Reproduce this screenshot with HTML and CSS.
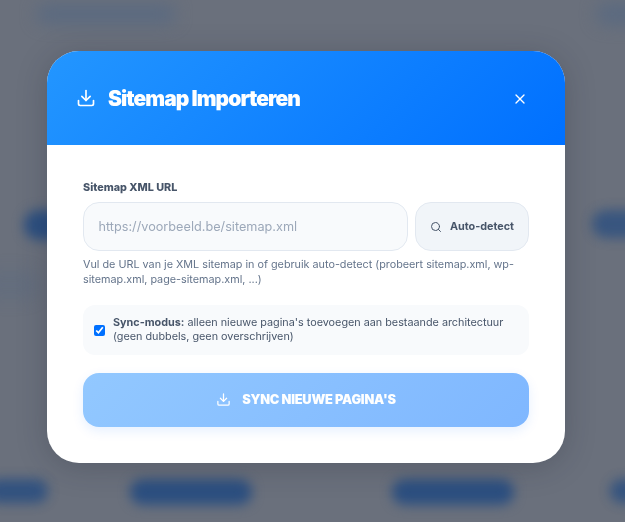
FILE: index.html
```html
<!DOCTYPE html>
<html lang="nl">
<head>
<meta charset="utf-8">
<title>Sitemap Importeren</title>
<link rel="stylesheet" href="styles.css">
</head>
<body>
<div class="backdrop" aria-hidden="true">
  <div class="blob faint b-top1"></div>
  <div class="blob faint b-top2"></div>
  <div class="blob faint b-left2"></div>
  <div class="blob b-left"></div>
  <div class="blob b-right"></div>
  <div class="blob b-bot1"></div>
  <div class="blob b-bot2"></div>
  <div class="blob b-bot3"></div>
  <div class="blob b-bot4"></div>
</div>
<main class="overlay">
  <section class="modal">
    <header class="modal-head">
      <div class="title-group">
        <svg class="icon-title" viewBox="0 0 24 24" fill="none" stroke="currentColor" stroke-width="2" stroke-linecap="round" stroke-linejoin="round"><path d="M21 15v4a2 2 0 0 1-2 2H5a2 2 0 0 1-2-2v-4"/><polyline points="7 10 12 15 17 10"/><line x1="12" y1="15" x2="12" y2="3"/></svg>
        <h1 class="title">Sitemap Importeren</h1>
      </div>
      <button class="close" type="button" aria-label="Sluiten">
        <svg viewBox="0 0 24 24" fill="none" stroke="currentColor" stroke-width="2" stroke-linecap="round"><line x1="18" y1="6" x2="6" y2="18"/><line x1="6" y1="6" x2="18" y2="18"/></svg>
      </button>
    </header>
    <div class="modal-body">
      <label class="field-label" for="url">Sitemap XML URL</label>
      <div class="url-row">
        <input class="url-input" id="url" type="text" placeholder="https://voorbeeld.be/sitemap.xml">
        <button class="detect" type="button">
          <svg viewBox="0 0 24 24" fill="none" stroke="currentColor" stroke-width="2" stroke-linecap="round"><circle cx="11" cy="11" r="8"/><line x1="21" y1="21" x2="16.65" y2="16.65"/></svg>
          Auto-detect
        </button>
      </div>
      <p class="help">Vul de URL van je XML sitemap in of gebruik auto-detect (probeert sitemap.xml, wp-sitemap.xml, page-sitemap.xml, ...)</p>
      <label class="sync-box">
        <input class="sync-check" type="checkbox" checked>
        <span class="sync-text"><strong>Sync-modus:</strong> alleen nieuwe pagina's toevoegen aan bestaande architectuur (geen dubbels, geen overschrijven)</span>
      </label>
      <button class="submit" type="button">
        <svg viewBox="0 0 24 24" fill="none" stroke="currentColor" stroke-width="2" stroke-linecap="round" stroke-linejoin="round"><path d="M21 15v4a2 2 0 0 1-2 2H5a2 2 0 0 1-2-2v-4"/><polyline points="7 10 12 15 17 10"/><line x1="12" y1="15" x2="12" y2="3"/></svg>
        SYNC NIEUWE PAGINA'S
      </button>
    </div>
  </section>
</main>
</body>
</html>
```
FILE: styles.css
```css
* { box-sizing: border-box; }
html, body { height: 100%; }
body {
  margin: 0;
  overflow: hidden;
  background: #6a707c;
  font-family: Inter, "Liberation Sans", sans-serif;
  color: #475569;
}
.backdrop { position: fixed; inset: 0; overflow: hidden; }
.blob {
  position: absolute;
  border-radius: 20px;
  background: #2c4f80;
  filter: blur(6px);
}
.blob.faint { background: #5b6a80; filter: blur(8px); }
.b-top1 { left: 36px; top: 4px; width: 140px; height: 20px; }
.b-top2 { left: 596px; top: 3px; width: 50px; height: 22px; }
.b-left2 { left: -20px; top: 270px; width: 60px; height: 30px; opacity: .4; }
.b-left { left: 24px; top: 210px; width: 40px; height: 30px; }
.b-right { left: 592px; top: 210px; width: 60px; height: 28px; opacity: .8; }
.b-bot1 { left: -14px; top: 479px; width: 62px; height: 24px; opacity: .9; }
.b-bot2 { left: 130px; top: 479px; width: 122px; height: 26px; }
.b-bot3 { left: 392px; top: 479px; width: 122px; height: 26px; }
.b-bot4 { left: 610px; top: 479px; width: 40px; height: 24px; opacity: .85; }
.overlay {
  position: relative;
  padding: 51px 60px 0 47px;
}
.modal {
  width: 518px;
  height: 412px;
  background: #fff;
  border-radius: 32px;
  overflow: hidden;
  box-shadow: 0 4px 30px rgba(30, 35, 50, .25);
}
.modal-head {
  height: 94px;
  padding: 0 37px 0 29px;
  display: flex;
  align-items: center;
  justify-content: space-between;
  background: linear-gradient(135deg, #2396ff 0%, #0070ff 100%);
  color: #fff;
}
.title-group { display: flex; align-items: center; gap: 12px; }
.icon-title { width: 20px; height: 20px; display: block; }
.title {
  margin: 1px 0 0;
  font-size: 21px;
  line-height: 28px;
  font-weight: 900;
  letter-spacing: -.95px;
}
.close {
  width: 16px;
  height: 16px;
  padding: 0;
  margin-top: 1px;
  border: 0;
  background: none;
  color: #fff;
  display: block;
}
.close svg { width: 16px; height: 16px; display: block; }
.modal-body { padding: 36px 36px 0; }
.field-label {
  display: block;
  font-size: 10.8px;
  line-height: 14px;
  font-weight: 800;
  color: #475569;
  margin-bottom: 7px;
}
.url-row { display: flex; gap: 7px; }
.url-input {
  width: 325px;
  height: 49px;
  padding: 0 14.5px;
  border: 1px solid #e2e8f0;
  border-radius: 16px;
  background: #f8fafc;
  font: 400 12.7px Inter, "Liberation Sans", sans-serif;
  color: #475569;
  outline: none;
}
.url-input::placeholder { color: #9ca8b9; opacity: 1; }
.detect {
  width: 114px;
  height: 49px;
  padding: 0;
  border: 1px solid #e2e8f0;
  border-radius: 16px;
  background: #f1f5f9;
  color: #475569;
  font: 700 10.8px Inter, "Liberation Sans", sans-serif;
  display: flex;
  align-items: center;
  justify-content: center;
  gap: 8px;
}
.detect svg { width: 12px; height: 12px; display: block; }
.help {
  margin: 6px 0 0;
  font-size: 10.8px;
  line-height: 15px;
  color: #64748b;
}
.sync-box {
  margin-top: 18px;
  height: 50px;
  padding: 0 24px 0 11px;
  border-radius: 12px;
  background: #f8fafc;
  display: flex;
  align-items: center;
  gap: 8px;
}
.sync-check {
  flex: none;
  width: 11px;
  height: 11px;
  margin: 0;
  accent-color: #0070ff;
}
.sync-text {
  font-size: 10.8px;
  line-height: 14px;
  color: #475569;
}
.submit {
  margin-top: 18px;
  width: 446px;
  height: 54px;
  padding: 0 0 1px;
  border: 0;
  border-radius: 16px;
  background: linear-gradient(135deg, #92c8ff 0%, #7fb7ff 100%);
  box-shadow: 0 4px 12px rgba(0, 112, 255, .1);
  color: #fff;
  font: 900 12.8px Inter, "Liberation Sans", sans-serif;
  letter-spacing: -.2px;
  display: flex;
  align-items: center;
  justify-content: center;
  gap: 11px;
}
.submit svg { width: 15px; height: 15px; display: block; }
```
